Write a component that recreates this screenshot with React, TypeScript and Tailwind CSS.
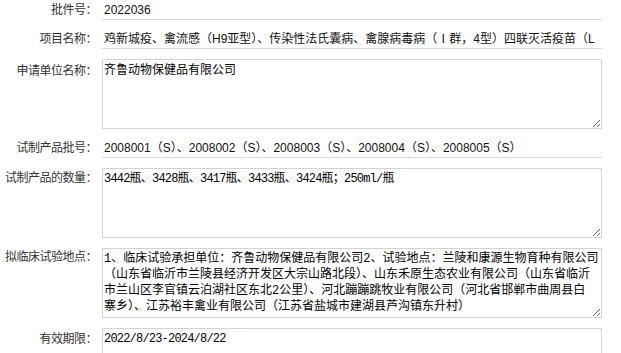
import React from "react"

const sans = "font-['Liberation_Sans','Noto_Sans_CJK_SC',sans-serif]"
const mono = "font-['Liberation_Mono','Noto_Sans_CJK_SC',monospace]"

interface RowProps {
  label: string
  children: React.ReactNode
  top?: string
}

const Row = ({ label, children, top = "pt-0" }: RowProps) => {
  return (
    <div className="flex flex-row mb-[10px]">
      <div
        className={`w-[98px] shrink-0 text-right pr-[1px] text-[12px] tracking-[-0.5px] leading-[18px] text-[#333] ${sans} ${top}`}>
        {label}
      </div>
      <div className="ml-[4px] w-[500px] shrink-0">{children}</div>
    </div>
  )
}

const Line = ({ children }: { children: React.ReactNode }) => {
  return (
    <div
      className={`h-[19px] pl-[2px] border-b border-[#d9d9d9] whitespace-nowrap overflow-hidden text-[12px] leading-[18px] text-[#111] ${sans}`}>
      {children}
    </div>
  )
}

const Area = ({ value, font, size = "text-[12px]" }: { value: string; font: string; size?: string }) => {
  return (
    <textarea
      readOnly
      wrap="off"
      value={value}
      className={`block w-[500px] h-[70px] border border-[#d3d3d3] pl-[1px] pr-0 pt-[2px] leading-[16px] text-black outline-none ${size} ${font}`}
    />
  )
}

// 地点文字按原样换行
const sites =
  "1、临床试验承担单位：齐鲁动物保健品有限公司2、试验地点：兰陵和康源生物育种有限公司\n" +
  "（山东省临沂市兰陵县经济开发区大宗山路北段）、山东禾原生态农业有限公司（山东省临沂\n" +
  "市兰山区李官镇云泊湖社区东北2公里）、河北蹦蹦跳牧业有限公司（河北省邯郸市曲周县白\n" +
  "寨乡）、江苏裕丰禽业有限公司（江苏省盐城市建湖县芦沟镇东升村）"

function App() {
  return (
    <div className="w-[621px] h-[353px] overflow-hidden bg-white pt-[1px]">
      <Row label="批件号：">
        <Line>2022036</Line>
      </Row>
      <Row label="项目名称：">
        <Line>鸡新城疫、禽流感（H9亚型）、传染性法氏囊病、禽腺病毒病（Ⅰ群，4型）四联灭活疫苗（L</Line>
      </Row>
      <Row label="申请单位名称：" top="pt-[3px]">
        <Area value="齐鲁动物保健品有限公司" font={sans} />
      </Row>
      <Row label="试制产品批号：">
        <Line>2008001（S）、2008002（S）、2008003（S）、2008004（S）、2008005（S）</Line>
      </Row>
      <Row label="试制产品的数量：" top="pt-[1px]">
        <Area value="3442瓶、3428瓶、3417瓶、3433瓶、3424瓶；250ml/瓶" font={mono} size="text-[12px] tracking-[-0.8px]" />
      </Row>
      <Row label="拟临床试验地点：" top="pt-0">
        <Area value={sites} font={mono} />
      </Row>
      <Row label="有效期限：" top="pt-[2px]">
        <Area value="2022/8/23-2024/8/22" font={mono} size="text-[12px] tracking-[-0.8px]" />
      </Row>
    </div>
  )
}

export default App
